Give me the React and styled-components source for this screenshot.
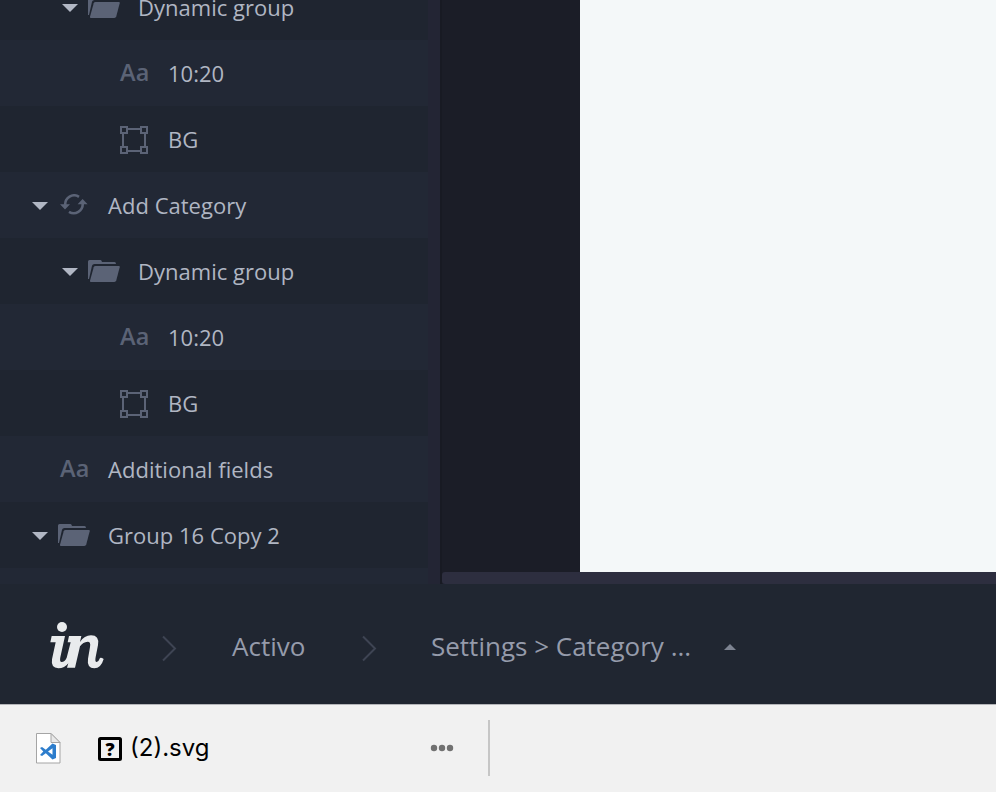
import React from "react";
import styled, { createGlobalStyle } from "styled-components";

const GlobalStyle = createGlobalStyle`
  * { box-sizing: border-box; }
  body { margin: 0; overflow: hidden; background: #202631; }
`;

const Page = styled.div`
  display: flex;
  flex-direction: column;
  width: 996px;
  height: 792px;
  overflow: hidden;
  font-family: "Open Sans", "Noto Sans", sans-serif;
`;

const Workspace = styled.main`
  display: flex;
  height: 584px;
  overflow: hidden;
`;

const LayerPanel = styled.aside`
  display: flex;
  flex-direction: column;
  justify-content: flex-end;
  width: 442px;
  height: 584px;
  flex: none;
  overflow: hidden;
  padding-right: 12px;
  background: #232534;
  border-right: 2px solid #181a23;
`;

const LayerRow = styled.div`
  display: flex;
  align-items: center;
  flex: none;
  height: ${(p) => (p.$cut ? 16 : 66)}px;
  padding-left: ${(p) => p.$indent}px;
  background: ${(p) => (p.$dark ? "#1f2530" : "#222835")};
`;

const Arrow = styled.svg`
  width: 16px;
  height: 8px;
  flex: none;
  margin-top: 2px;
  fill: #b1b7c4;
`;

const IconSlot = styled.span`
  display: flex;
  align-items: center;
  flex: none;
  width: ${(p) => p.$width}px;
  margin-left: ${(p) => p.$gap}px;
  margin-top: ${(p) => p.$drop}px;
  color: #5b6376;
`;

const TypeGlyph = styled.span`
  font-size: 23.5px;
  line-height: 30px;
  font-weight: 600;
  letter-spacing: 0.2px;
`;

const LayerName = styled.span`
  font-size: 22px;
  line-height: 30px;
  letter-spacing: 0.02px;
  color: #b0b6c3;
  white-space: nowrap;
`;

const Stage = styled.section`
  display: flex;
  flex-direction: column;
  flex: 1;
  background: #1b1d27;
`;

const Artboard = styled.div`
  flex: 1;
  margin-left: 138px;
  background: #f4f8f9;
`;

const ScrollTrack = styled.div`
  height: 12px;
  background: #2d2e3f;
  border-radius: 3px 0 0 3px;
`;

const Breadcrumbs = styled.nav`
  display: flex;
  align-items: center;
  height: 120px;
  padding: 0 0 0 48px;
  background: #202631;
`;

const Logo = styled.svg`
  width: 60px;
  height: 54px;
  flex: none;
  margin-top: 4px;
  fill: #e9ebed;
`;

const Chevron = styled.svg`
  width: 16px;
  height: 28px;
  flex: none;
  margin: 7px 0 0 ${(p) => p.$gap}px;
  fill: none;
  stroke: #3e4453;
  stroke-width: 2;
`;

const Crumb = styled.span`
  width: ${(p) => p.$width}px;
  margin: 3px 0 0 ${(p) => p.$gap}px;
  font-size: 26px;
  line-height: 36px;
  color: #959bab;
  white-space: nowrap;
`;

const UpArrow = styled.svg`
  width: 12px;
  height: 6px;
  margin: 6px 0 0 33px;
  fill: #7d8391;
`;

const DownloadBar = styled.footer`
  display: flex;
  align-items: center;
  height: 88px;
  padding: 0 0 2px 34px;
  border-top: 1px solid #b4b5b9;
  background: #f1f1f1;
`;

const FileIcon = styled.svg`
  width: 28px;
  height: 34px;
  flex: none;
`;

const MissingGlyph = styled.svg`
  width: 24px;
  height: 24px;
  flex: none;
  margin: 2px 0 0 36px;
`;

const FileName = styled.span`
  width: 300px;
  margin-left: 8px;
  font-family: Inter, "Liberation Sans", sans-serif;
  font-size: 24px;
  line-height: 30px;
  color: #000;
`;

const MoreDots = styled.svg`
  width: 24px;
  height: 8px;
  fill: #717171;
`;

const Separator = styled.div`
  width: 2px;
  height: 56px;
  margin-left: 34px;
  background: #c6c6c6;
`;

const Folder = () => (
  <svg width="32" height="24" viewBox="0 0 32 24" fill="currentColor">
    <path d="M0 20V2.5Q0 1 1.5 1H12.5Q13.5 1 14 3H26.5Q28 3 28 5H6.5Q4.5 5 4 6.7L1 20Z" />
    <path d="M7.5 7H31Q32 7 31.7 8.2L28.3 21.3Q27.8 23 26.3 23H3Q1.7 23 2 21.7L5.7 8.3Q6.1 7 7.5 7Z" />
  </svg>
);

const Shape = () => (
  <svg width="28" height="28" viewBox="0 0 28 28" fill="none" stroke="currentColor" strokeWidth="2">
    <path d="M8 3H20M8 25H20M3 8V20M25 8V20" />
    <path d="M1 1H7V7H1ZM21 1H27V7H21ZM1 21H7V27H1ZM21 21H27V27H21Z" />
  </svg>
);

const Sync = () => (
  <svg width="28" height="22" viewBox="0 0 28 22">
    <g fill="none" stroke="currentColor" strokeWidth="2.6">
      <path d="M19 2.8A9 9 0 0 0 5.2 11" />
      <path d="M9 17.8A9 9 0 0 0 22.7 9.6" />
    </g>
    <path fill="currentColor" d="M0 10.2H10L5 15.6ZM17.6 10.2H27.6L22.6 5Z" />
  </svg>
);

const icons = {
  folder: { draw: <Folder />, width: 50, gap: 10, drop: 0 },
  sync: { draw: <Sync />, width: 48, gap: 12, drop: 0 },
  text: { draw: <TypeGlyph>Aa</TypeGlyph>, width: 48, gap: 0, drop: -2 },
  shape: { draw: <Shape />, width: 48, gap: 0, drop: 2 },
};

const layers = [
  { name: "Dynamic group", icon: "folder", indent: 62, open: true, dark: true },
  { name: "10:20", icon: "text", indent: 120 },
  { name: "BG", icon: "shape", indent: 120, dark: true },
  { name: "Add Category", icon: "sync", indent: 32, open: true },
  { name: "Dynamic group", icon: "folder", indent: 62, open: true, dark: true },
  { name: "10:20", icon: "text", indent: 120 },
  { name: "BG", icon: "shape", indent: 120, dark: true },
  { name: "Additional fields", icon: "text", indent: 60 },
  { name: "Group 16 Copy 2", icon: "folder", indent: 32, open: true, dark: true },
];

function Layer({ layer }) {
  const icon = icons[layer.icon];
  return (
    <LayerRow $indent={layer.indent} $dark={layer.dark}>
      {layer.open && (
        <Arrow viewBox="0 0 16 8">
          <path d="M0 0H16L8 8Z" />
        </Arrow>
      )}
      <IconSlot $width={icon.width} $gap={icon.gap} $drop={icon.drop}>
        {icon.draw}
      </IconSlot>
      <LayerName>{layer.name}</LayerName>
    </LayerRow>
  );
}

export default function App() {
  return (
    <Page>
      <GlobalStyle />
      <Workspace>
        <LayerPanel>
          {layers.map((layer, i) => (
            <Layer key={i} layer={layer} />
          ))}
          <LayerRow $cut $indent={0} />
        </LayerPanel>
        <Stage>
          <Artboard />
          <ScrollTrack />
        </Stage>
      </Workspace>
      <Breadcrumbs>
        <Logo viewBox="54 27 180 162">
          <circle cx="96" cy="51" r="15" />
          <path d="M65 78H105L91 142Q88 156 95 156Q104 156 110 143L122 97H113L117 78H154L150 96Q163 76 183 76Q209 76 204 105L197 141Q194 156 200 156Q206 155 210 144Q213 141 221 147Q213 175 193 175Q170 174 174 146L180 111Q183 95 173 95Q159 96 150 109L135 173H111L115 160Q104 175 85 175Q62 174 66 148L77 97H61Z" />
        </Logo>
        <Chevron $gap={53} viewBox="0 0 16 28">
          <path d="M2 2.5L14 14.5L2 26.5" />
        </Chevron>
        <Crumb $gap={55} $width={75}>Activo</Crumb>
        <Chevron $gap={54} viewBox="0 0 16 28">
          <path d="M2 2.5L14 14.5L2 26.5" />
        </Chevron>
        <Crumb $gap={54} $width={260}>Settings &gt; Category ...</Crumb>
        <UpArrow viewBox="0 0 12 6">
          <path d="M0 6H12L6 0Z" />
        </UpArrow>
      </Breadcrumbs>
      <DownloadBar>
        <FileIcon viewBox="0 0 28 34">
          <path d="M2.5 2.5H17L26 11.5V32H2.5Z" fill="#fff" stroke="#a5a5a5" />
          <path d="M17 2.5V11.5H26Z" fill="#e9e9e9" stroke="#a5a5a5" strokeLinejoin="round" />
          <path d="M18.5 12.5L22 14V27L18.5 28.5L11.8 22.3L8 25L6 24L9.3 20.5L6 17L8 16L11.8 18.7ZM18.5 17.2L14 20.5L18.5 23.8Z" fill="#2d7dcc" fillRule="evenodd" />
        </FileIcon>
        <MissingGlyph viewBox="0 0 24 24">
          <rect x="1.5" y="1.5" width="21" height="21" rx="1" fill="none" stroke="#000" strokeWidth="3" />
          <text x="12" y="18.5" textAnchor="middle" fontFamily="Open Sans" fontWeight="800" fontSize="18">?</text>
        </MissingGlyph>
        <FileName>(2).svg</FileName>
        <MoreDots viewBox="0 0 24 8">
          <circle cx="4" cy="4" r="3.2" />
          <circle cx="12" cy="4" r="3.2" />
          <circle cx="20" cy="4" r="3.2" />
        </MoreDots>
        <Separator />
      </DownloadBar>
    </Page>
  );
}
